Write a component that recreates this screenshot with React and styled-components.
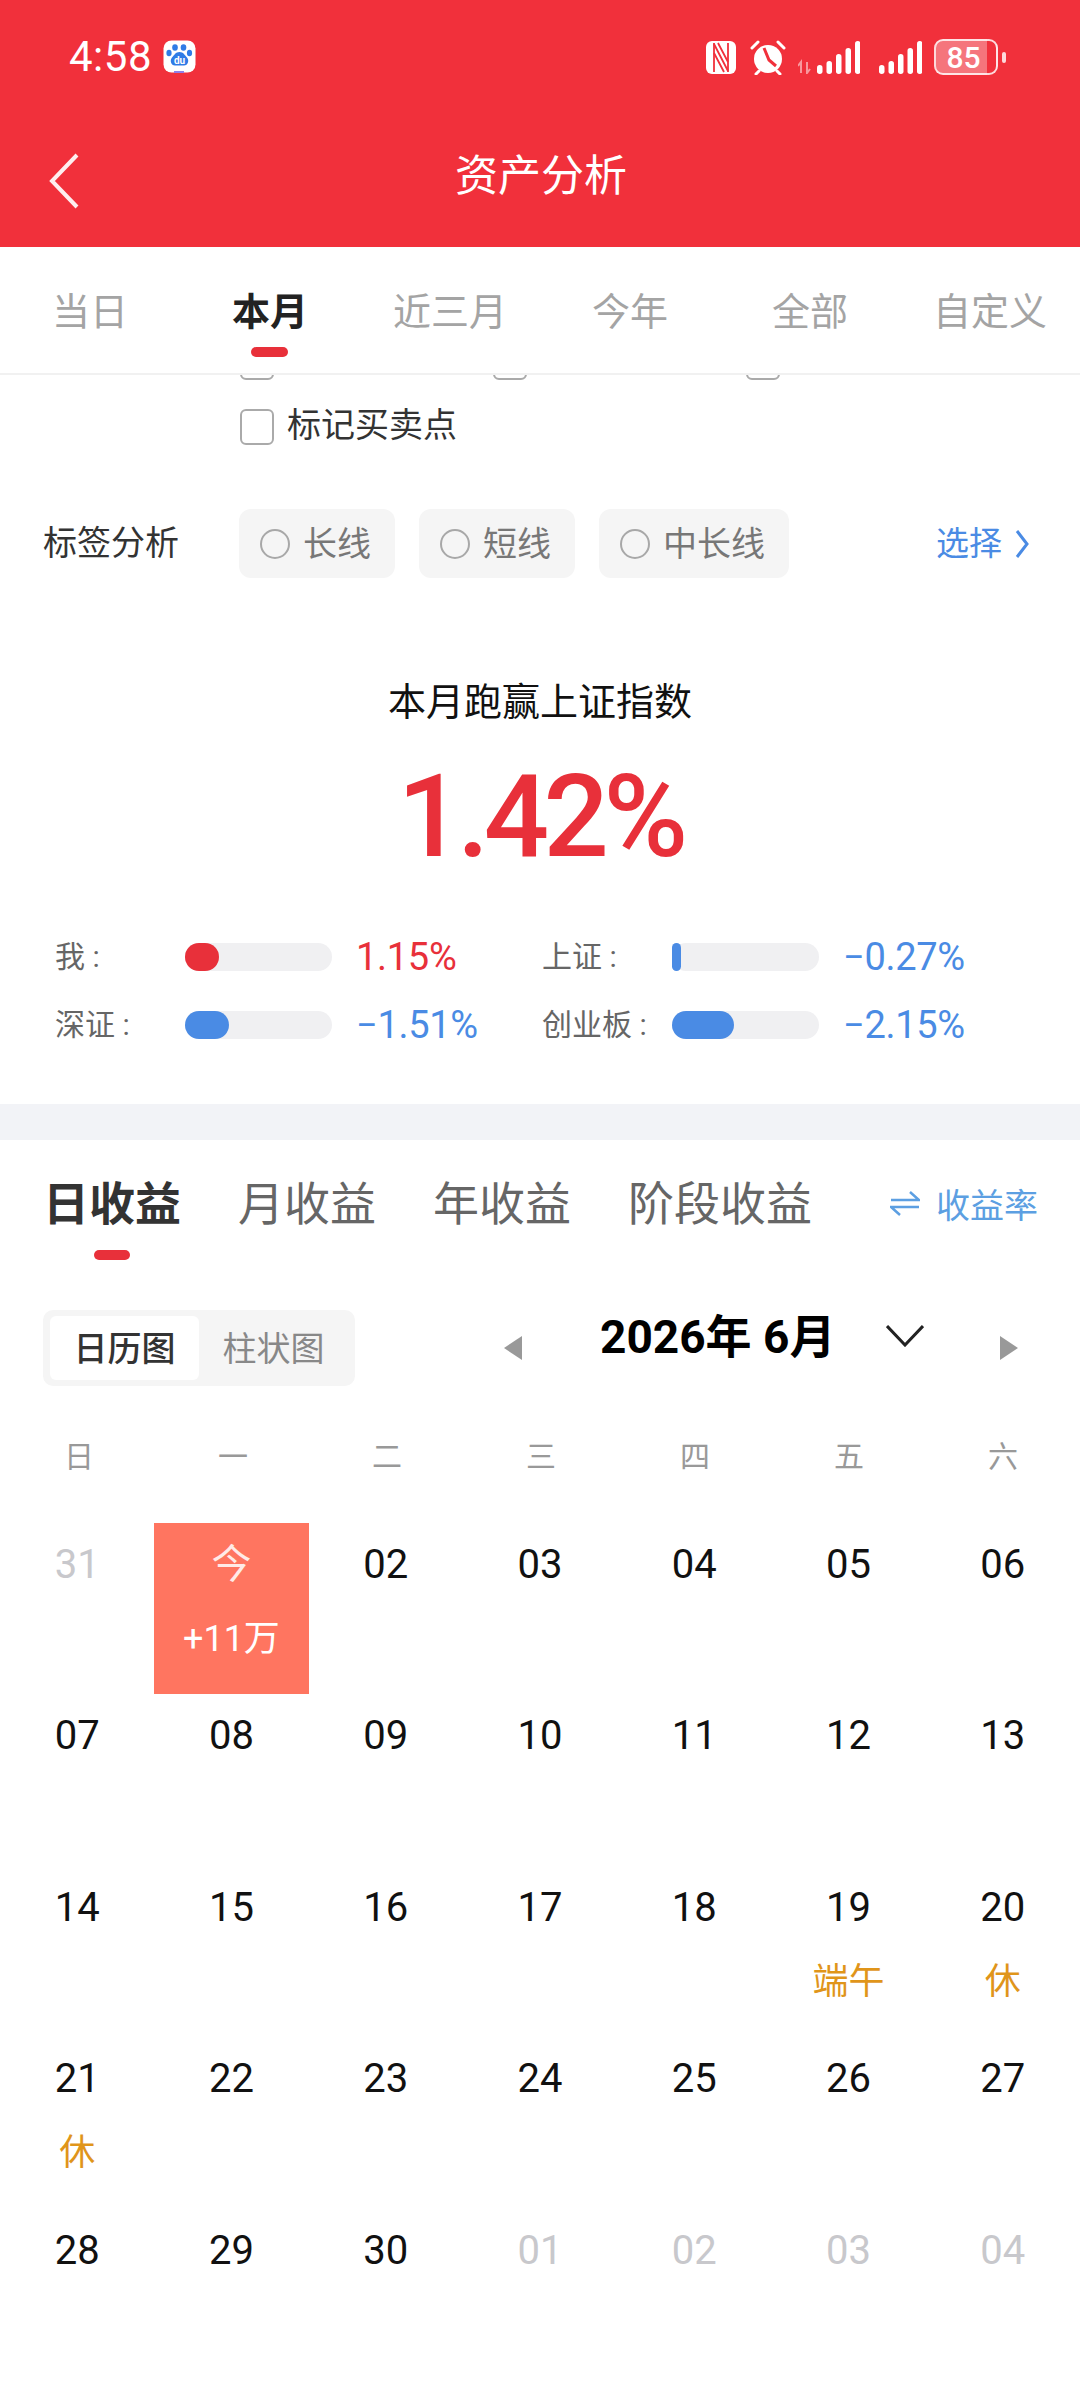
import React from 'react';
import styled, { createGlobalStyle } from 'styled-components';

const FONT = 'Roboto, "Noto Sans CJK SC", sans-serif';
const RED = '#e8303a';
const BLUE = '#4a8be4';

const GlobalStyle = createGlobalStyle`
  html, body {
    margin: 0;
    padding: 0;
    background: #fff;
    font-family: ${FONT};
  }
  * { box-sizing: border-box; }
`;

const Page = styled.div`
  width: 1080px;
  height: 2403px;
  overflow: hidden;
  background: #fff;
`;

const Header = styled.header`
  height: 247px;
  background: #f1303b;
  color: #fff;
`;

const StatusBar = styled.div`
  height: 114px;
  display: flex;
  align-items: center;
  padding: 0 82px 0 69px;
`;

const Clock = styled.span`
  font-size: 42px;
  line-height: 48px;
  letter-spacing: 0.5px;
  margin-right: 11px;
`;

const StatusIcons = styled.div`
  margin-left: auto;
  display: flex;
  align-items: center;
`;

const Battery = styled.div`
  position: relative;
  width: 64px;
  height: 36px;
  margin-left: 12px;
  border: 2.5px solid #ffffffd0;
  border-radius: 9px;
  display: flex;
  align-items: center;
  justify-content: center;
  padding-right: 5px;
  font-size: 30px;
  font-weight: 500;
  background: linear-gradient(90deg, #ffffff55 0 85%, transparent 85%);

  &::after {
    content: '';
    position: absolute;
    right: -10px;
    top: 11px;
    width: 4px;
    height: 11px;
    border-radius: 2px;
    background: #ffffffd0;
  }
`;

const NavBar = styled.div`
  position: relative;
  height: 124px;
  display: flex;
  align-items: center;
  justify-content: center;
`;

const BackIcon = styled.svg`
  position: absolute;
  left: 48px;
  top: 39px;
`;

const Title = styled.h1`
  margin: 0;
  padding-left: 2px;
  font-size: 43px;
  line-height: 60px;
  font-weight: 400;
`;

const RangeTabs = styled.nav`
  height: 128px;
  display: flex;
  border-bottom: 2px solid #f1f1f1;
`;

const RangeTab = styled.div`
  position: relative;
  flex: 1;
  padding-top: 39px;
  text-align: center;
  font-size: 38px;
  line-height: 52px;
  font-weight: ${(p) => (p.$active ? 700 : 400)};
  color: ${(p) => (p.$active ? '#222' : '#a4a4a4')};

  &::after {
    content: '';
    display: ${(p) => (p.$active ? 'block' : 'none')};
    position: absolute;
    left: 71px;
    bottom: 16px;
    width: 37px;
    height: 10px;
    border-radius: 5px;
    background: ${RED};
  }
`;

const ClippedRow = styled.div`
  height: 5px;
  overflow: hidden;
  display: flex;
  align-items: flex-end;
  gap: 219px;
  padding-left: 240px;
`;

const Check = styled.span`
  flex: none;
  width: 34px;
  height: 36px;
  border: 2px solid #aaa;
  border-radius: 6px;
  background: #fff;
`;

const CheckRow = styled.label`
  margin: 29px 0 0 240px;
  height: 36px;
  display: flex;
  align-items: center;
  gap: 13px;
  font-size: 34px;
  line-height: 30px;
  color: #333;
`;

const CheckText = styled.span`
  margin-top: -4px;
`;

const TagRow = styled.div`
  margin-top: 64px;
  height: 69px;
  padding: 0 50px 0 43px;
  display: flex;
  align-items: center;
`;

const TagLabel = styled.span`
  width: 196px;
  margin-top: -7px;
  font-size: 34px;
  color: #333;
`;

const TagChips = styled.div`
  display: flex;
  gap: 24px;
`;

const Chip = styled.div`
  height: 69px;
  padding: 0 24px 0 21px;
  display: flex;
  align-items: center;
  gap: 13px;
  border-radius: 12px;
  background: #f5f5f5;
  color: #777;
`;

const ChipText = styled.span`
  margin-top: -5px;
  font-size: 34px;
`;

const Radio = styled.span`
  width: 30px;
  height: 30px;
  border: 2px solid #a8a8a8;
  border-radius: 50%;
`;

const SelectLink = styled.div`
  margin-left: auto;
  display: flex;
  align-items: center;
  gap: 12px;
  font-size: 33px;
  color: ${BLUE};

  span {
    margin-top: -5px;
  }
`;

const CompareTitle = styled.div`
  margin-top: 96px;
  text-align: center;
  font-size: 38px;
  line-height: 56px;
  color: #111;
`;

const HeroValue = styled.div`
  margin-top: 20px;
  text-align: center;
  font-size: 115px;
  line-height: 134px;
  font-weight: 500;
  letter-spacing: -5.5px;
  color: ${RED};
`;

const StatGrid = styled.div`
  margin-top: 59px;
  padding-left: 55px;
  display: grid;
  grid-template-columns: 487px 1fr;
  row-gap: 40px;
`;

const Stat = styled.div`
  height: 28px;
  display: flex;
  align-items: center;
`;

const StatLabel = styled.span`
  width: 130px;
  margin-top: -6px;
  font-size: 30px;
  color: #666;
`;

const Track = styled.div`
  width: 147px;
  height: 28px;
  border-radius: 14px;
  background: #f0f0f2;
`;

const Fill = styled.div`
  height: 100%;
  border-radius: 14px;
  background: ${(p) => (p.$up ? RED : BLUE)};
`;

const StatValue = styled.span`
  margin-left: 24px;
  font-size: 38px;
  line-height: 44px;
  letter-spacing: -0.3px;
  color: ${(p) => (p.$up ? RED : BLUE)};
`;

const Divider = styled.div`
  margin-top: 65px;
  height: 36px;
  background: #f2f3f7;
`;

const EarnTabs = styled.div`
  height: 170px;
  padding: 34px 42px 0 43px;
  display: flex;
  align-items: flex-start;
  gap: 57px;
`;

const EarnTab = styled.div`
  position: relative;
  font-size: 46px;
  line-height: 60px;
  font-weight: ${(p) => (p.$active ? 700 : 400)};
  color: ${(p) => (p.$active ? '#333' : '#666')};

  &::after {
    content: '';
    display: ${(p) => (p.$active ? 'block' : 'none')};
    position: absolute;
    left: 51px;
    bottom: -26px;
    width: 36px;
    height: 10px;
    border-radius: 5px;
    background: ${RED};
  }
`;

const RateSwitch = styled.div`
  margin-left: auto;
  display: flex;
  align-items: center;
  gap: 16px;
  height: 58px;
  font-size: 34px;
  color: #5c9fe2;
`;

const Controls = styled.div`
  height: 76px;
  padding-left: 43px;
  display: flex;
  align-items: center;
`;

const Toggle = styled.div`
  width: 312px;
  height: 76px;
  padding: 6px 7px;
  display: flex;
  border-radius: 10px;
  background: #f5f5f5;
`;

const ToggleItem = styled.div`
  width: 150px;
  padding-bottom: 4px;
  display: flex;
  align-items: center;
  justify-content: center;
  border-radius: 6px;
  font-size: 34px;
  font-weight: ${(p) => (p.$active ? 500 : 400)};
  color: ${(p) => (p.$active ? '#333' : '#888')};
  background: ${(p) => (p.$active ? '#fff' : 'transparent')};
`;

const Arrow = styled.span`
  flex: none;
  width: 0;
  height: 0;
  border-top: 12px solid transparent;
  border-bottom: 12px solid transparent;
  ${(p) => (p.$right ? 'border-left: 18px solid #999;' : 'border-right: 18px solid #999;')}
  margin-left: ${(p) => p.$gap}px;
`;

const MonthLabel = styled.div`
  margin: -22px 0 0 78px;
  width: 228px;
  white-space: nowrap;
  font-size: 46px;
  line-height: 56px;
  font-weight: 700;
  color: #000;
`;

const MonthChevron = styled.svg`
  margin: -24px 0 0 58px;
  flex: none;
`;

const Weekdays = styled.div`
  margin-top: 41px;
  height: 54px;
  padding-left: 2px;
  display: grid;
  grid-template-columns: repeat(7, 1fr);
  align-items: center;
  text-align: center;
  font-size: 30px;
  color: #999;
`;

const CalendarGrid = styled.div`
  margin-top: 42px;
  display: grid;
  grid-template-columns: repeat(7, 1fr);
  grid-auto-rows: 171.4px;
`;

const Day = styled.div`
  padding-top: 18px;
  display: flex;
  flex-direction: column;
  align-items: center;
  background: ${(p) => (p.$today ? '#ff7560' : 'transparent')};
  color: ${(p) => (p.$today ? '#fff' : p.$muted ? '#c8c8cc' : '#111')};
`;

const DayNum = styled.span`
  font-size: 40px;
  line-height: 48px;
  opacity: ${(p) => (p.$today ? 0.85 : 1)};
`;

const DayNote = styled.span`
  margin-top: 28px;
  font-size: 36px;
  line-height: 44px;
  color: ${(p) => (p.$today ? '#fff' : '#e0951a')};
`;

const BaiduIcon = () => (
  <svg width="33" height="34" viewBox="0 0 33 34">
    <rect x="0.5" y="0.5" width="32" height="32" rx="8" fill="#fff" />
    <ellipse cx="6" cy="13" rx="2.6" ry="3.2" fill="#2f7be6" />
    <ellipse cx="12" cy="7.5" rx="2.8" ry="3.2" fill="#2f7be6" />
    <ellipse cx="20.5" cy="7.5" rx="2.8" ry="3.2" fill="#2f7be6" />
    <ellipse cx="26.5" cy="13" rx="2.6" ry="3.2" fill="#2f7be6" />
    <path d="M16.5 12c4 0 5 3 7.5 5.5 2.5 2.8 1 8-3 8h-9c-4 0-5.5-5.2-3-8C11.5 15 12.5 12 16.5 12z" fill="#2f7be6" />
    <text x="16.5" y="24" textAnchor="middle" fontSize="10" fontWeight="700" fill="#fff" fontFamily="Roboto, sans-serif">du</text>
    <rect x="11" y="31" width="10" height="2" fill="#8f7fe8" />
  </svg>
);

const NfcIcon = () => (
  <svg width="30" height="33" viewBox="0 0 30 33">
    <rect width="30" height="33" rx="6" fill="#fff" />
    <path d="M8 2v29M22 2v29" stroke="#f1303b" strokeWidth="1.8" />
    <path d="M8 3l14 27M8 12l10 19M12 2l10 19" stroke="#f1303b" strokeWidth="1.8" fill="none" />
  </svg>
);

const AlarmIcon = () => (
  <svg width="36" height="35" viewBox="0 0 36 35" style={{ marginLeft: 14 }}>
    <circle cx="18" cy="19" r="14" fill="#fff" />
    <path d="M2 8l6-6M34 8l-6-6M9 31l-3 3M27 31l3 3" stroke="#fff" strokeWidth="3" strokeLinecap="round" />
    <path d="M14 8l5 12 7 6" stroke="#f1303b" strokeWidth="3" fill="none" />
  </svg>
);

const SignalIcon = ({ arrows }) => (
  <svg width={arrows ? 62 : 43} height="34" viewBox={`${arrows ? -19 : 0} 0 ${arrows ? 62 : 43} 34`} style={{ marginLeft: arrows ? 12 : 19 }}>
    {arrows && <path d="M-16 33v-11l-3 4M-10 22v11l3-4" stroke="#ffffff80" strokeWidth="2" fill="none" />}
    {[9, 13, 20, 26, 33].map((h, i) => (
      <rect key={h} x={i * 9.5} y={34 - h} width="5.5" height={h} rx="2.7" fill="#fff" />
    ))}
  </svg>
);

const tabs = ['当日', '本月', '近三月', '今年', '全部', '自定义'];
const tags = ['长线', '短线', '中长线'];
const stats = [
  { label: '我 :', fill: 34, value: '1.15%', up: true },
  { label: '上证 :', fill: 9, value: '−0.27%' },
  { label: '深证 :', fill: 44, value: '−1.51%' },
  { label: '创业板 :', fill: 62, value: '−2.15%' },
];
const earnTabs = ['日收益', '月收益', '年收益', '阶段收益'];
const weekdays = ['日', '一', '二', '三', '四', '五', '六'];
const pad = (n) => String(n).padStart(2, '0');
const notes = { 19: '端午', 20: '休', 21: '休' };

const days = [
  { num: '31', muted: true },
  { num: '今', note: '+11万', today: true },
  ...Array.from({ length: 29 }, (_, i) => ({ num: pad(i + 2), note: notes[i + 2] })),
  ...[1, 2, 3, 4].map((n) => ({ num: pad(n), muted: true })),
];

const App = () => (
  <Page>
    <GlobalStyle />
    <Header>
      <StatusBar>
        <Clock>4:58</Clock>
        <BaiduIcon />
        <StatusIcons>
          <NfcIcon />
          <AlarmIcon />
          <SignalIcon arrows />
          <SignalIcon />
          <Battery>85</Battery>
        </StatusIcons>
      </StatusBar>
      <NavBar>
        <BackIcon width="32" height="56" viewBox="0 0 32 56">
          <path d="M29 2L4 28l25 26" stroke="#fff" strokeWidth="4" fill="none" opacity="0.92" />
        </BackIcon>
        <Title>资产分析</Title>
      </NavBar>
    </Header>

    <RangeTabs>
      {tabs.map((t) => (
        <RangeTab key={t} $active={t === '本月'}>{t}</RangeTab>
      ))}
    </RangeTabs>

    <ClippedRow>
      <Check />
      <Check />
      <Check />
    </ClippedRow>
    <CheckRow>
      <Check />
      <CheckText>标记买卖点</CheckText>
    </CheckRow>

    <TagRow>
      <TagLabel>标签分析</TagLabel>
      <TagChips>
        {tags.map((t) => (
          <Chip key={t}>
            <Radio />
            <ChipText>{t}</ChipText>
          </Chip>
        ))}
      </TagChips>
      <SelectLink>
        <span>选择</span>
        <svg width="16" height="30" viewBox="0 0 16 30">
          <path d="M3 2l10 13L3 28" stroke={BLUE} strokeWidth="3" fill="none" />
        </svg>
      </SelectLink>
    </TagRow>

    <CompareTitle>本月跑赢上证指数</CompareTitle>
    <HeroValue>1.42%</HeroValue>

    <StatGrid>
      {stats.map((s) => (
        <Stat key={s.label}>
          <StatLabel>{s.label}</StatLabel>
          <Track>
            <Fill $up={s.up} style={{ width: s.fill }} />
          </Track>
          <StatValue $up={s.up}>{s.value}</StatValue>
        </Stat>
      ))}
    </StatGrid>

    <Divider />

    <EarnTabs>
      {earnTabs.map((t) => (
        <EarnTab key={t} $active={t === '日收益'}>{t}</EarnTab>
      ))}
      <RateSwitch>
        <svg width="30" height="26" viewBox="0 0 30 26">
          <path d="M1 10h28L20 2M29 17H1l9 8" stroke="#5c9fe2" strokeWidth="2.5" fill="none" />
        </svg>
        收益率
      </RateSwitch>
    </EarnTabs>

    <Controls>
      <Toggle>
        <ToggleItem $active>日历图</ToggleItem>
        <ToggleItem>柱状图</ToggleItem>
      </Toggle>
      <Arrow $gap={149} />
      <MonthLabel>2026年 6月</MonthLabel>
      <MonthChevron width="38" height="22" viewBox="0 0 38 22">
        <path d="M1 1l18 19L37 1" stroke="#222" strokeWidth="3" fill="none" />
      </MonthChevron>
      <Arrow $right $gap={76} />
    </Controls>

    <Weekdays>
      {weekdays.map((d) => (
        <span key={d}>{d}</span>
      ))}
    </Weekdays>

    <CalendarGrid>
      {days.map((d, i) => (
        <Day key={i} $today={d.today} $muted={d.muted}>
          <DayNum $today={d.today}>{d.num}</DayNum>
          {d.note && <DayNote $today={d.today}>{d.note}</DayNote>}
        </Day>
      ))}
    </CalendarGrid>
  </Page>
);

export default App;
